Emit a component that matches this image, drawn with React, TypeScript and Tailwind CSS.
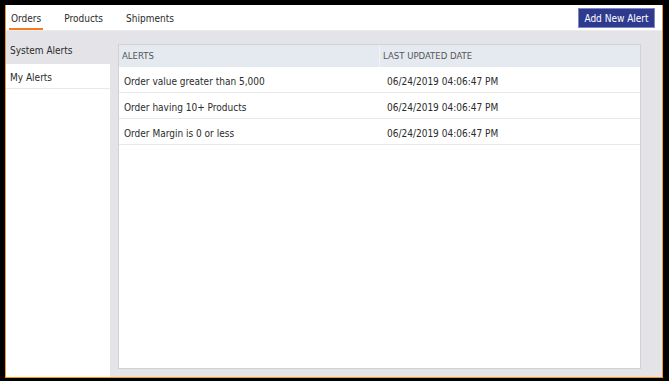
import React from "react";

const rows = [
  { name: "Order value greater than 5,000", date: "06/24/2019 04:06:47 PM" },
  { name: "Order having 10+ Products", date: "06/24/2019 04:06:47 PM" },
  { name: "Order Margin is 0 or less", date: "06/24/2019 04:06:47 PM" },
];

export default function App() {
  return (
    <div
      className="w-[669px] h-[381px] bg-black pt-[5px] pl-[5px] pr-[6px] pb-[3px] text-[#2b2b2b]"
      style={{ fontFamily: '"DejaVu Sans Condensed", "DejaVu Sans", sans-serif', fontStretch: "condensed" }}
    >
      <div className="w-full h-full flex flex-col border-l border-r border-b border-[#f7941d] bg-white">
        {/* Tab bar */}
        <div className="h-[26px] flex items-stretch justify-between border-b border-[#ececec] bg-white shrink-0">
          <div className="flex items-stretch pl-[3px] text-[10px]">
            <div className="px-[2px] flex items-center border-b-[2px] border-[#f47b20] pt-[3px]">Orders</div>
            <div className="ml-[21px] flex items-center pt-[1px]">Products</div>
            <div className="ml-[23px] flex items-center pt-[1px]">Shipments</div>
          </div>
          <div className="flex items-start pt-[3px] pr-[7px]">
            <button className="h-[20px] w-[77px] bg-[#2e3a8e] border border-[#7f87c4] text-white text-[10px] font-normal whitespace-nowrap flex items-center justify-center">
              Add New Alert
            </button>
          </div>
        </div>
        {/* Body */}
        <div className="flex-1 flex bg-[#e4e4e8]">
          <div className="w-[104px] flex flex-col shrink-0">
            <div className="h-[33px] flex items-end pb-[6px] pl-[4px] text-[10px]">System Alerts</div>
            <div className="flex-1 bg-white flex flex-col">
              <div className="h-[25px] flex items-center pl-[4px] pt-[2px] text-[10px] border-b border-[#e8e8e8]">My Alerts</div>
            </div>
          </div>
          <div className="flex-1 pl-[8px] pr-[21px] pt-[13px] pb-[8px]">
            <div className="w-full h-full bg-white border border-[#d2d2d2] flex flex-col">
              <div className="h-[22px] flex bg-[#e5eaf1] text-[9.5px] text-[#555] shrink-0">
                <div className="w-[261px] flex items-center pl-[3px] pt-[1px] border-r border-[#f2f4f8]">ALERTS</div>
                <div className="flex items-center pl-[3px] pt-[1px]">LAST UPDATED DATE</div>
              </div>
              {rows.map((r) => (
                <div key={r.name} className="h-[26px] flex items-center pt-[3px] text-[10px] border-b border-[#e8e8e8] shrink-0">
                  <div className="w-[261px] pl-[5px]">{r.name}</div>
                  <div className="pl-[7px]">{r.date}</div>
                </div>
              ))}
            </div>
          </div>
        </div>
      </div>
    </div>
  );
}
